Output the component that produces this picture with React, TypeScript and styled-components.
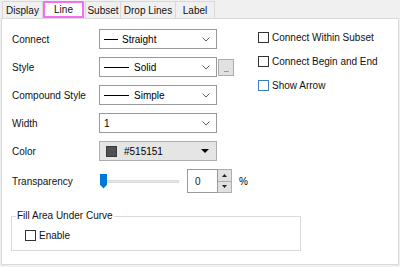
import React from "react";
import styled, { createGlobalStyle } from "styled-components";

const Global = createGlobalStyle`
  html, body { margin: 0; padding: 0; background: #f0f0f0; }
  body { font-family: "Liberation Sans", Arial, sans-serif; font-size: 10px; color: #000; }
  #root { width: 400px; height: 267px; overflow: hidden; }
  * { box-sizing: border-box; }
`;

const Window = styled.div`
  display: flex;
  flex-direction: column;
  width: 400px;
  height: 267px;
`;

const TabStrip = styled.div`
  display: flex;
  align-items: flex-end;
  height: 18px;
  padding: 1px 0 0 2px;
`;

const Tab = styled.div<{ $active?: boolean; $w: number }>`
  width: ${(p) => p.$w}px;
  height: 17px;
  display: flex;
  align-items: center;
  justify-content: center;
  background: ${(p) => (p.$active ? "#fff" : "#f0f0f0")};
  border: ${(p) => (p.$active ? "2px solid #f56ef3" : "1px solid #d9d9d9")};
  border-bottom: ${(p) => (p.$active ? "2px solid #f56ef3" : "none")};
  margin-left: ${(p) => (p.$active ? "1px" : "0")};
  margin-right: ${(p) => (p.$active ? "1px" : "-1px")};
  color: #111;
  white-space: nowrap;
`;

const Panel = styled.div`
  flex: 1;
  margin: 0 1px 2px 1px;
  border: 1px solid #d9d9d9;
  background: #fff;
  padding: 10px 0 0 10px;
`;

const TopArea = styled.div`
  display: flex;
`;

const Form = styled.div`
  width: 246px;
  display: flex;
  flex-direction: column;
  gap: 8px;
`;

const FieldRow = styled.div<{ $h?: number }>`
  display: grid;
  grid-template-columns: 87px auto auto auto;
  justify-content: start;
  align-items: center;
  height: ${(p) => p.$h ?? 20}px;
`;

const Label = styled.span`
  color: #111;
  white-space: nowrap;
`;

const Combo = styled.div<{ $gray?: boolean }>`
  width: 118px;
  height: 20px;
  display: flex;
  align-items: center;
  padding: 0 6px 0 ${(p) => (p.$gray ? 6 : 4)}px;
  background: ${(p) => (p.$gray ? "#e5e5e5" : "#fff")};
  border: 1px solid ${(p) => (p.$gray ? "#adadad" : "#9a9a9a")};
  white-space: nowrap;
`;

const LineSample = styled.span<{ $w: number }>`
  width: ${(p) => p.$w}px;
  height: 1px;
  background: #000;
  margin-right: ${(p) => (p.$w > 20 ? 5 : 4)}px;
  flex: none;
`;

const ComboText = styled.span`
  flex: 1;
`;

const Swatch = styled.span`
  width: 11px;
  height: 11px;
  background: #515151;
  border: 1px solid #3a3a3a;
  margin-right: 7px;
  flex: none;
`;

const MoreButton = styled.div`
  width: 16px;
  height: 17px;
  margin-left: 1px;
  background: #e1e1e1;
  border: 1px solid #adadad;
  display: flex;
  align-items: flex-end;
  justify-content: center;
  font-size: 8px;
  line-height: 10px;
  color: #222;
  letter-spacing: -0.5px;
`;

const Chevron = () => (
  <svg width="8" height="5" viewBox="0 0 8 5">
    <path d="M0.5 0.5 L4 4 L7.5 0.5" fill="none" stroke="#606060" strokeWidth="1" />
  </svg>
);

const Caret = () => (
  <svg width="8" height="4" viewBox="0 0 8 4" style={{ marginRight: 1 }}>
    <path d="M0 0 H8 L4 4 Z" fill="#000" />
  </svg>
);

const Slider = styled.div`
  display: flex;
  align-items: center;
  width: 79px;
  margin-left: 1px;
  height: 16px;
`;

const Thumb = styled.div`
  width: 7px;
  height: 15px;
  background: #0078d7;
  clip-path: polygon(0 0, 100% 0, 100% 75%, 50% 100%, 0 75%);
  flex: none;
`;

const Track = styled.div`
  flex: 1;
  height: 3px;
  background: #e7e7e7;
  border: 1px solid #dadada;
  border-left: none;
`;

const Spin = styled.div`
  display: flex;
  margin-left: 8px;
  height: 24px;
`;

const SpinInput = styled.div`
  width: 31px;
  height: 24px;
  border: 1px solid #9a9a9a;
  background: #fff;
  display: flex;
  align-items: center;
  padding-left: 7px;
  color: #1a1a1a;
`;

const SpinButtons = styled.div`
  width: 14px;
  display: flex;
  flex-direction: column;
`;

const SpinButton = styled.div`
  flex: 1;
  background: #e1e1e1;
  border: 1px solid #adadad;
  border-left: none;
  display: flex;
  align-items: center;
  justify-content: center;
  & + & { border-top: none; }
`;

const Percent = styled.span`
  margin-left: 7px;
`;

const Options = styled.div`
  display: flex;
  flex-direction: column;
  gap: 11px;
  padding-top: 2px;
`;

const CheckRow = styled.label`
  display: flex;
  align-items: center;
  height: 13px;
  white-space: nowrap;
  color: #111;
`;

const Box = styled.span<{ $focus?: boolean }>`
  width: 11px;
  height: 11px;
  border: 1px solid ${(p) => (p.$focus ? "#3d7fc4" : "#333")};
  background: #fff;
  margin-right: 3px;
  flex: none;
`;

const Group = styled.fieldset`
  width: 290px;
  margin: 17px 0 0 -1px;
  padding: 7px 0 8px 4px;
  border: 1px solid #dadada;
`;

const Legend = styled.legend`
  padding: 0 1px;
  line-height: 12px;
  color: #111;
`;

const GroupCheck = styled(CheckRow)`
  margin-left: 9px;
`;

export default function App() {
  const tabs = [
    { t: "Display", w: 41 },
    { t: "Line", w: 41, active: true },
    { t: "Subset", w: 36 },
    { t: "Drop Lines", w: 56 },
    { t: "Label", w: 40 },
  ];
  return (
    <Window>
      <Global />
      <TabStrip>
        {tabs.map((x) => (
          <Tab key={x.t} $w={x.w} $active={x.active}>
            {x.t}
          </Tab>
        ))}
      </TabStrip>
      <Panel>
        <TopArea>
          <Form>
            <FieldRow>
              <Label>Connect</Label>
              <Combo>
                <LineSample $w={14} />
                <ComboText>Straight</ComboText>
                <Chevron />
              </Combo>
            </FieldRow>
            <FieldRow>
              <Label>Style</Label>
              <Combo>
                <LineSample $w={25} />
                <ComboText>Solid</ComboText>
                <Chevron />
              </Combo>
              <MoreButton>...</MoreButton>
            </FieldRow>
            <FieldRow>
              <Label>Compound Style</Label>
              <Combo>
                <LineSample $w={25} />
                <ComboText>Simple</ComboText>
                <Chevron />
              </Combo>
            </FieldRow>
            <FieldRow>
              <Label>Width</Label>
              <Combo>
                <ComboText>1</ComboText>
                <Chevron />
              </Combo>
            </FieldRow>
            <FieldRow>
              <Label>Color</Label>
              <Combo $gray>
                <Swatch />
                <ComboText>#515151</ComboText>
                <Caret />
              </Combo>
            </FieldRow>
            <FieldRow $h={24}>
              <Label>Transparency</Label>
              <Slider>
                <Thumb />
                <Track />
              </Slider>
              <Spin>
                <SpinInput>0</SpinInput>
                <SpinButtons>
                  <SpinButton>
                    <svg width="5" height="3" viewBox="0 0 5 3">
                      <path d="M0 3 L2.5 0 L5 3 Z" fill="#222" />
                    </svg>
                  </SpinButton>
                  <SpinButton>
                    <svg width="5" height="3" viewBox="0 0 5 3">
                      <path d="M0 0 L5 0 L2.5 3 Z" fill="#222" />
                    </svg>
                  </SpinButton>
                </SpinButtons>
              </Spin>
              <Percent>%</Percent>
            </FieldRow>
          </Form>
          <Options>
            <CheckRow>
              <Box />
              Connect Within Subset
            </CheckRow>
            <CheckRow>
              <Box />
              Connect Begin and End
            </CheckRow>
            <CheckRow>
              <Box $focus />
              Show Arrow
            </CheckRow>
          </Options>
        </TopArea>
        <Group>
          <Legend>Fill Area Under Curve</Legend>
          <GroupCheck>
            <Box />
            Enable
          </GroupCheck>
        </Group>
      </Panel>
    </Window>
  );
}
